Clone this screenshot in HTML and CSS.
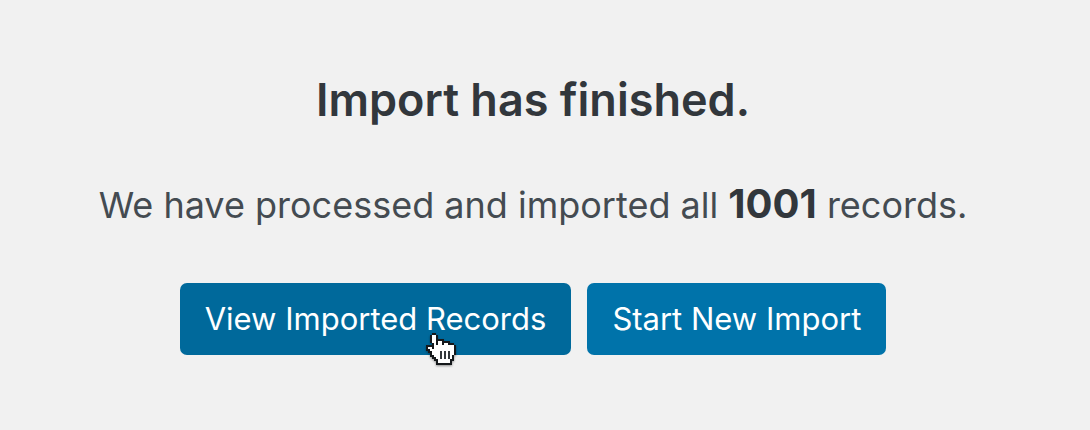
FILE: index.html
```
<!DOCTYPE html>
<html lang="en">

<head>
    <meta charset="UTF-8">
    <meta name="viewport" content="width=device-width, initial-scale=1.0">
    <title>Import</title>
    <link rel="stylesheet" href="styles.css">
</head>

<body>
    <main class="import-result">
        <h1 class="title">Import has finished.</h1>
        <p class="message">We have processed and imported all <strong>1001</strong> records.</p>
        <div class="actions">
            <a class="button hover" href="#records">
                View Imported Records
                <svg class="pointer" viewBox="0 0 16 18" width="32" height="36" shape-rendering="crispEdges" aria-hidden="true">
                    <path d="M4 1h2v1h1v2h3v1h3v1h2v1h1v5h-1v3h-1v2H6v-2H5v-1H4v-1H3v-2H2v-1H1V7h3V6H3V2h1z" fill="#15181b" />
                    <path d="M4 2h2v5h1V5h2v2h1V6h2v1h1V7h2v5h-1v2h-1v2H7v-2H6v-1H5v-1H4v-2H3V9H2V8h2v1h1V6H4z" fill="#fff" />
                    <path d="M8 10h1v4H8zM10 10h1v4h-1zM12 10h1v4h-1z" fill="#33373b" />
                </svg>
            </a>
            <a class="button" href="#import">Start New Import</a>
        </div>
    </main>
</body>

</html>
```

FILE: styles.css
```
body {
    margin: 0;
    background-color: #f1f1f1;
    font-family: Inter, "Liberation Sans", sans-serif;
}

.import-result {
    padding: 72px 24px 72px 0;
    text-align: center;
}

.title {
    margin: 0;
    font-size: 45px;
    line-height: 56px;
    font-weight: 600;
    color: #32373c;
}

.message {
    margin: 49px 0 50px;
    font-size: 36px;
    line-height: 56px;
    color: #444b51;
}

.message strong {
    font-size: 40px;
    line-height: 1;
    font-weight: 700;
    color: #32373c;
}

.actions {
    display: flex;
    justify-content: center;
    gap: 16px;
}

.button {
    position: relative;
    padding: 0 25px;
    border-radius: 7px;
    background-color: #0073aa;
    color: #fff;
    font-size: 31px;
    line-height: 72px;
    text-decoration: none;
}

.button.hover,
.button:hover {
    background-color: #00699b;
}

/* hand cursor over the hovered button */
.pointer {
    position: absolute;
    top: 48px;
    left: 244px;
    filter: drop-shadow(0 1px 1px rgba(0, 0, 0, .4));
}
```
